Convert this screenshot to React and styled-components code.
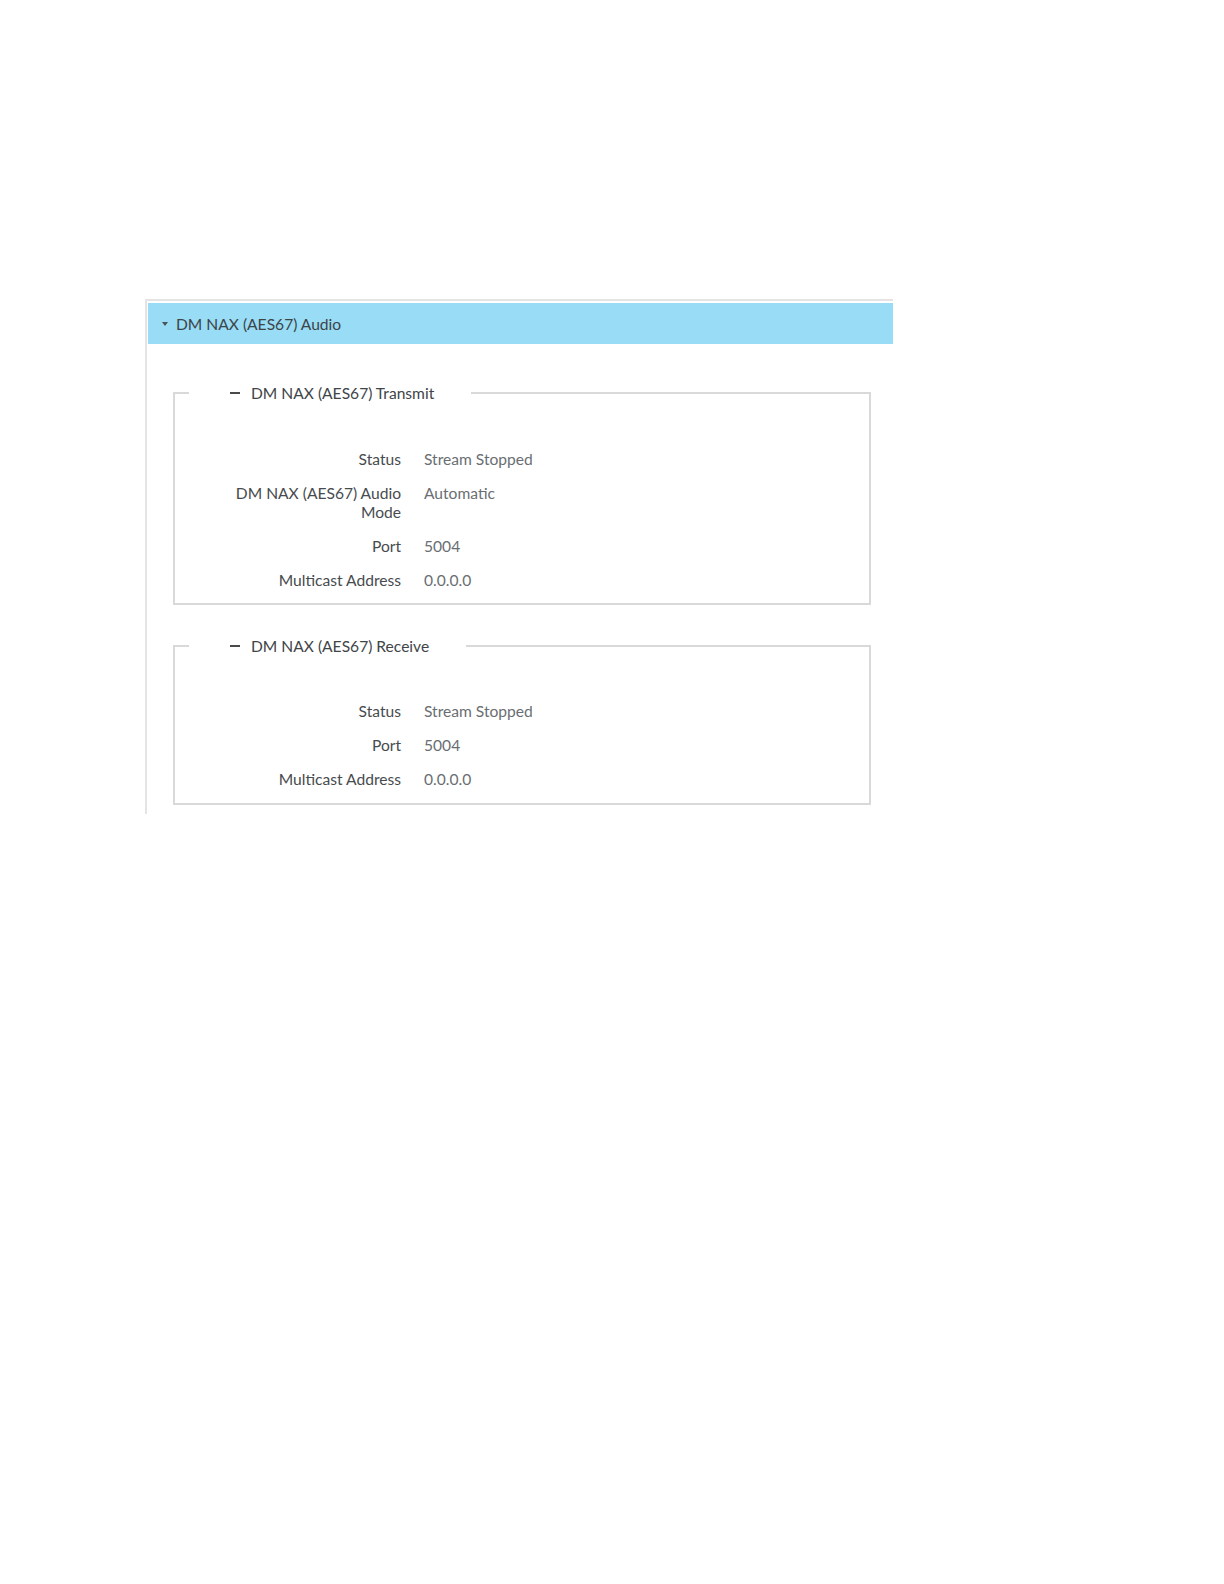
import styled, { createGlobalStyle } from "styled-components";

const GlobalStyle = createGlobalStyle`
  html, body {
    margin: 0;
    padding: 0;
    background: #ffffff;
  }
  body {
    font-family: Lato, "Open Sans", "Liberation Sans", sans-serif;
  }
`;

const Page = styled.div`
  padding: 299px 0 0 145px;
  min-height: 1584px;
  box-sizing: border-box;
`;

const Panel = styled.section`
  width: 748px;
  box-sizing: border-box;
  border-top: 2px solid #e4e4e4;
  border-left: 2px solid #e4e4e4;
  padding: 2px 0 9px 1px;
`;

const PanelHeader = styled.div`
  display: flex;
  align-items: center;
  gap: 8px;
  height: 41px;
  padding-left: 14px;
  background: #98dcf5;
  color: #3d4448;
  font-size: 15.6px;
`;

const Caret = styled.span`
  width: 0;
  height: 0;
  border-left: 3.5px solid transparent;
  border-right: 3.5px solid transparent;
  border-top: 4px solid #4a5358;
  margin-top: 1px;
`;

const Group = styled.fieldset`
  margin: ${({ $first }) => ($first ? "39px" : "31px")} 22px 0 25px;
  padding: 0 0 ${({ $first }) => ($first ? "13px" : "14px")} 0;
  border: 2px solid #d9d9d9;
  min-width: 0;
`;

const Legend = styled.legend`
  display: flex;
  align-items: center;
  gap: 11px;
  margin-left: 14px;
  padding: 0 37px 0 41px;
  height: 20px;
  color: #404548;
  font-size: 15.6px;
`;

const Minus = styled.span`
  width: 10px;
  height: 2px;
  background: #4a4a4a;
`;

const Rows = styled.div`
  display: grid;
  grid-template-columns: 170px 1fr;
  column-gap: 23px;
  row-gap: 15px;
  padding: ${({ $first }) => ($first ? "47px" : "46px")} 0 0 56px;
  font-size: 15.6px;
  line-height: 19px;
`;

const Label = styled.div`
  text-align: right;
  color: #474b4e;
`;

const Value = styled.div`
  color: #6a6e72;
`;

const transmit = [
  ["Status", "Stream Stopped"],
  ["DM NAX (AES67) Audio Mode", "Automatic"],
  ["Port", "5004"],
  ["Multicast Address", "0.0.0.0"],
];

const receive = [
  ["Status", "Stream Stopped"],
  ["Port", "5004"],
  ["Multicast Address", "0.0.0.0"],
];

function Section({ title, rows, first }) {
  return (
    <Group $first={first}>
      <Legend>
        <Minus />
        {title}
      </Legend>
      <Rows $first={first}>
        {rows.map(([k, v]) => [
          <Label key={k + "l"}>{k}</Label>,
          <Value key={k + "v"}>{v}</Value>,
        ])}
      </Rows>
    </Group>
  );
}

export default function App() {
  return (
    <>
      <GlobalStyle />
      <Page>
        <Panel>
          <PanelHeader>
            <Caret />
            DM NAX (AES67) Audio
          </PanelHeader>
          <Section first title="DM NAX (AES67) Transmit" rows={transmit} />
          <Section title="DM NAX (AES67) Receive" rows={receive} />
        </Panel>
      </Page>
    </>
  );
}
